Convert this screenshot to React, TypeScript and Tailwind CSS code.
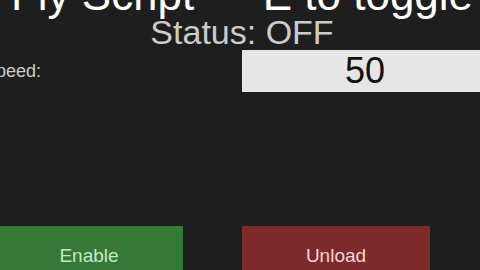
import * as React from 'react';

const font = { fontFamily: '"Liberation Sans", Arial, sans-serif' };

export default function App() {
  const [speed, setSpeed] = React.useState('50');

  return (
    <div className="h-screen w-screen overflow-hidden bg-[#1e1e1e]" style={font}>
      <div className="flex flex-col">
        <h1 className="mt-[-27px] whitespace-nowrap pl-[4px] text-center text-[44px] leading-[44px] font-normal text-white">
          Fly Script — E to toggle
        </h1>
        <div className="mt-[-2px] pl-[4px] text-center text-[34px] leading-[34px] text-[#cccccc]">
          Status: OFF
        </div>

        <div className="mt-[1px] ml-[-16px] flex w-[504px] items-center justify-between">
          <label className="text-[18px] leading-[18px] text-[#cccccc]">Speed:</label>
          <input
            value={speed}
            onChange={(e) => setSpeed(e.target.value)}
            className="h-[42px] w-[246px] bg-[#e6e6e6] text-center text-[36px] leading-[42px] text-[#111111] outline-none"
          />
        </div>

        <div className="mt-[134px] ml-[-5px] flex gap-[59px]">
          <button className="w-[188px] bg-[#347a36] pt-[20px] pb-[20px] text-[19px] leading-[19px] text-[#c8e6c9]">
            Enable
          </button>
          <button className="w-[188px] bg-[#7d2a2a] pt-[20px] pb-[20px] text-[19px] leading-[19px] text-[#f2d6d6]">
            Unload
          </button>
        </div>
      </div>
    </div>
  );
}
